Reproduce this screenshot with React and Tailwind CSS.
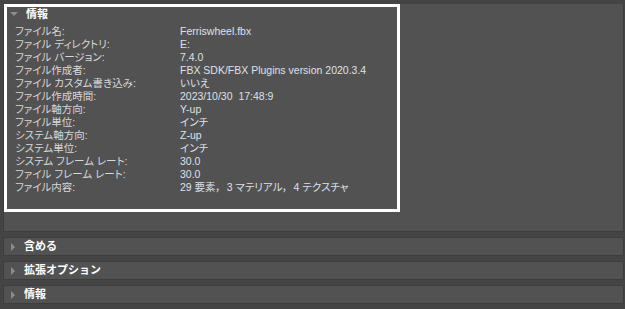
const rows = [
  ['ファイル名:', 'Ferriswheel.fbx'],
  ['ファイル ディレクトリ:', 'E:'],
  ['ファイル バージョン:', '7.4.0'],
  ['ファイル作成者:', 'FBX SDK/FBX Plugins version 2020.3.4'],
  ['ファイル カスタム書き込み:', 'いいえ'],
  ['ファイル作成時間:', '2023/10/30  17:48:9'],
  ['ファイル軸方向:', 'Y-up'],
  ['ファイル単位:', 'インチ'],
  ['システム軸方向:', 'Z-up'],
  ['システム単位:', 'インチ'],
  ['システム フレーム レート:', '30.0'],
  ['ファイル フレーム レート:', '30.0'],
  ['ファイル内容:', '29 要素，  3 マテリアル，  4 テクスチャ'],
];

const sections = ['含める', '拡張オプション', '情報'];

function SectionRow({ title }) {
  return (
    <div className="h-[19px] flex items-center bg-[#525252] border border-[#3d3d3d] rounded-[2px]">
      <span className="ml-[7px] w-0 h-0 border-y-[4px] border-y-transparent border-l-[4px] border-l-[#8c8c8c]" />
      <span className="ml-[9px] text-[11px] font-bold text-white leading-none">{title}</span>
    </div>
  );
}

export default function App() {
  return (
    <div
      className="w-[625px] h-[309px] overflow-hidden bg-[#444444] pt-[4px] pl-[3px] pr-[1px]"
      style={{ fontFamily: '"Liberation Sans", "Noto Sans CJK JP", sans-serif' }}
    >
      <div className="h-[228px] bg-[#525252] border border-[#3d3d3d] rounded-[2px] border-t-0">
        <div className="w-[396px] h-[208px] border-[3px] border-white">
          <div className="h-[14px] flex items-center">
            <span className="ml-[3px] w-0 h-0 border-x-[4px] border-x-transparent border-t-[4px] border-t-[#8c8c8c]" />
            <span className="ml-[8px] text-[11px] font-bold text-white leading-none">情報</span>
          </div>
          <div className="mt-[4px] pl-[8px] text-[10.5px] leading-[13px] [font-feature-settings:'palt']">
            {rows.map(([label, value]) => (
              <div key={label} className="flex h-[13px]">
                <span className="w-[165px] text-[#d8d8d8] whitespace-nowrap">{label}</span>
                <span className="text-[#dde1ea] whitespace-pre">{value}</span>
              </div>
            ))}
          </div>
        </div>
      </div>
      <div className="mt-[5px] flex flex-col gap-[5px]">
        {sections.map((s) => (
          <SectionRow key={s} title={s} />
        ))}
      </div>
    </div>
  );
}
